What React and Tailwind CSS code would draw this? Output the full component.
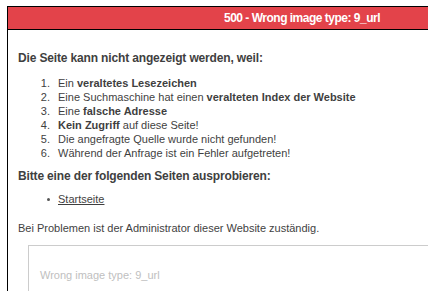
const items = [
  <>Ein <b>veraltetes Lesezeichen</b></>,
  <>Eine Suchmaschine hat einen <b>veralteten Index der Website</b></>,
  <>Eine <b>falsche Adresse</b></>,
  <><b>Kein Zugriff</b> auf diese Seite!</>,
  <>Die angefragte Quelle wurde nicht gefunden!</>,
  <>Während der Anfrage ist ein Fehler aufgetreten!</>,
];

export default function App() {
  return (
    <div className="w-[428px] h-[291px] overflow-hidden bg-white" style={{ fontFamily: '"Liberation Sans", Arial, sans-serif' }}>
      <div className="ml-[7px] mt-[6px] w-[460px] border-l border-t border-black text-[#3f3f3f]">
        <div className="h-[23px] bg-[#e3434a] text-white font-bold text-[12px] tracking-[-0.5px] leading-[22px] pl-[216px] border-b border-black whitespace-nowrap">
          500 - Wrong image type: 9_url
        </div>
        <div className="pl-[10px] pt-[21px] text-[11px] leading-[14px]">
          <p className="font-bold text-[12px] tracking-[-0.15px]">Die Seite kann nicht angezeigt werden, weil:</p>
          <ol className="mt-[11px]">
            {items.map((it, i) => (
              <li key={i} className="flex">
                <span className="w-[32px] text-right shrink-0">{i + 1}.</span>
                <span className="ml-[8px]">{it}</span>
              </li>
            ))}
          </ol>
          <p className="font-bold text-[12px] tracking-[-0.15px] mt-[9px]">Bitte eine der folgenden Seiten ausprobieren:</p>
          <ul className="mt-[9px]">
            <li className="flex items-center">
              <span className="w-[32px] shrink-0 flex justify-end">
                <span className="block w-[3px] h-[3px] rounded-full bg-[#555]"></span>
              </span>
              <a className="ml-[8px] underline">Startseite</a>
            </li>
          </ul>
          <p className="mt-[15px]">Bei Problemen ist der Administrator dieser Website zuständig.</p>
          <div className="ml-[10px] mt-[10px] border border-[#cccccc] h-[80px] pl-[11px] pt-[22px] text-[#c0c0c0]">
            Wrong image type: 9_url
          </div>
        </div>
      </div>
    </div>
  );
}
